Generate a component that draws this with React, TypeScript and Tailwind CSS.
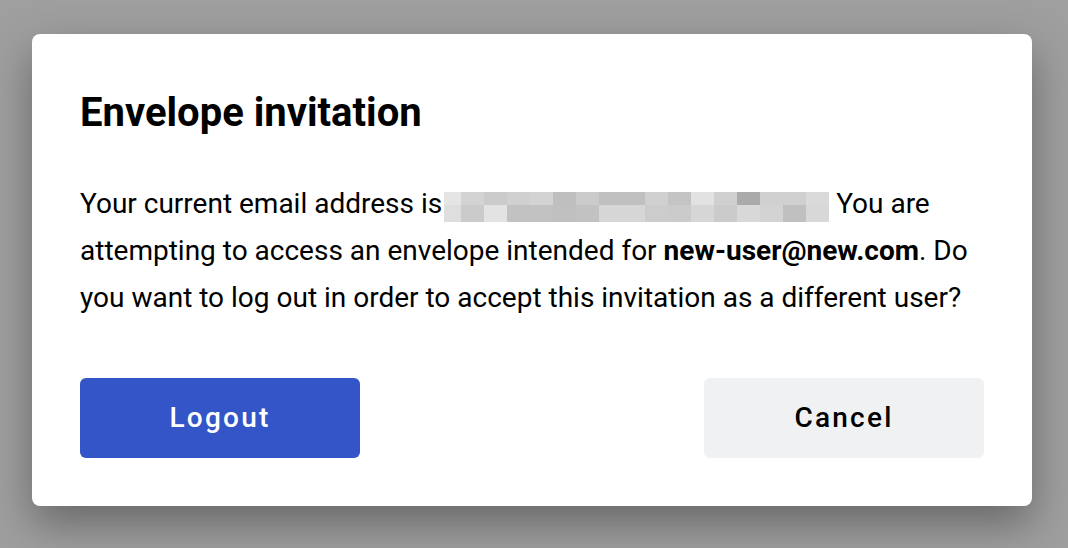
import React from "react";

const topRow = [
  "bg-[#e5e5e5]", "bg-[#d3d3d3]", "bg-[#cbcbcb]", "bg-[#d0d0d0]", "bg-[#d3d3d3]", "bg-[#bfbfbf]",
  "bg-[#cbcbcb]", "bg-[#c0c0c0]", "bg-[#c0c0c0]", "bg-[#d0d0d0]", "bg-[#c4c4c4]", "bg-[#e2e2e2]",
  "bg-[#d0d0d0]", "bg-[#aaaaaa]", "bg-[#d0d0d0]", "bg-[#d0d0d0]", "bg-[#dadada]",
];
const bottomRow = [
  "bg-[#dedede]", "bg-[#cbcbcb]", "bg-[#e3e3e3]", "bg-[#c2c2c2]", "bg-[#c2c2c2]", "bg-[#c0c0c0]",
  "bg-[#c2c2c2]", "bg-[#d6d6d6]", "bg-[#d6d6d6]", "bg-[#cccccc]", "bg-[#cbcbcb]", "bg-[#d6d6d6]",
  "bg-[#cbcbcb]", "bg-[#d8d8d8]", "bg-[#d3d3d3]", "bg-[#c0c0c0]", "bg-[#d8d8d8]",
];

// blurred-out email, pixelated like the screenshot
const HiddenEmail = () => (
  <span className="ml-[2px] inline-grid h-[30px] w-[385px] translate-y-[1px] grid-cols-[17px_repeat(16,1fr)] grid-rows-[13px_17px] align-middle">
    {topRow.map((c, i) => (
      <span key={"t" + i} className={c} />
    ))}
    {bottomRow.map((c, i) => (
      <span key={"b" + i} className={c} />
    ))}
  </span>
);

export default function App() {
  return (
    <div className="min-h-screen bg-[#9f9f9f] pt-[34px] font-['Roboto',_'Liberation_Sans',_sans-serif]">
      <div className="ml-8 w-[1000px] rounded-lg bg-white px-12 pt-12 pb-12 shadow-[0_18px_44px_rgba(0,0,0,0.35)]">
        <h2 className="text-[40px] leading-[62px] font-bold text-black">Envelope invitation</h2>

        <p className="mt-[36px] text-[28px] leading-[47px] text-black">
          Your current email address is
          <HiddenEmail /> You are attempting to access an envelope intended for{" "}
          <span className="font-bold">new-user@new.com</span>. Do you want to log out in order to accept this
          invitation as a different user?
        </p>

        <div className="mt-[57px] flex items-center justify-between">
          <button className="h-20 w-[280px] rounded-md bg-[#3355c7] text-[28px] font-medium tracking-[0.08em] text-white">
            Logout
          </button>
          <button className="h-20 w-[280px] rounded-md bg-[#f0f1f3] text-[28px] font-medium tracking-[0.08em] text-black">
            Cancel
          </button>
        </div>
      </div>
    </div>
  );
}
